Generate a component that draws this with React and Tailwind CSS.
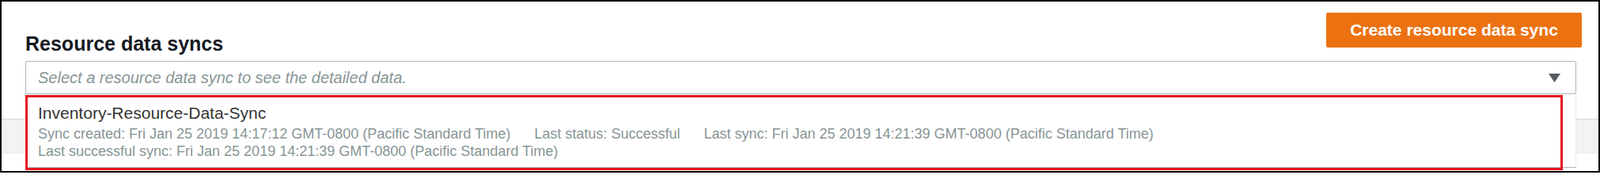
import React from 'react';

const syncItem = {
  name: 'Inventory-Resource-Data-Sync',
  created: 'Fri Jan 25 2019 14:17:12 GMT-0800 (Pacific Standard Time)',
  status: 'Successful',
  lastSync: 'Fri Jan 25 2019 14:21:39 GMT-0800 (Pacific Standard Time)',
  lastSuccess: 'Fri Jan 25 2019 14:21:39 GMT-0800 (Pacific Standard Time)',
};

function Caret() {
  return (
    <svg width="15" height="11" viewBox="0 0 15 11" className="shrink-0">
      <polygon points="0,0 15,0 7.5,11" fill="#545b64" />
    </svg>
  );
}

export default function App() {
  return (
    <div className="relative w-[2022px] h-[218px] overflow-hidden border-2 border-black bg-white font-['Liberation_Sans',Arial,sans-serif]">
      <div className="pl-[30px] pr-[28px] pt-[14px]">
        {/* Header */}
        <div className="flex items-start justify-between">
          <h1 className="pt-[24px] text-[25px] leading-[30px] font-bold text-[#16191f]">
            Resource data syncs
          </h1>
          <button className="-mr-[7px] h-[44px] w-[323px] rounded-[2px] bg-[#ec7211] text-[21px] font-bold text-white">
            Create resource data sync
          </button>
        </div>

        {/* Select */}
        <div className="mt-[7px] flex h-[42px] items-center justify-between rounded-[2px] border border-[#aab7b8] bg-white pl-[15px] pr-[19px]">
          <span className="text-[20px] italic leading-[40px] text-[#879596]">
            Select a resource data sync to see the detailed data.
          </span>
          <Caret />
        </div>
      </div>

      {/* Table header behind the open list */}
      <div className="mt-[31px] h-[44px] border-y border-t-[#d5dbdb] border-b-[#eaeded] bg-[#f2f3f3]" />

      {/* Open dropdown list */}
      <div className="absolute left-[30px] top-[117px] w-[1960px] border-x border-b border-x-[#e5eaea] border-b-[#aab7b8] bg-white pl-[15px] pt-[11px] pb-[9px]">
        <div className="text-[21px] leading-[26px] text-[#333]">{syncItem.name}</div>
        <div className="mt-[2px] text-[18px] leading-[22px] text-[#879596]">
          <div className="flex gap-[30px] whitespace-nowrap">
            <span>Sync created: {syncItem.created}</span>
            <span>Last status: {syncItem.status}</span>
            <span>Last sync: {syncItem.lastSync}</span>
          </div>
          <div className="whitespace-nowrap">Last successful sync: {syncItem.lastSuccess}</div>
        </div>
      </div>

      {/* Highlight */}
      <div className="pointer-events-none absolute left-[30px] top-[118px] h-[95px] w-[1943px] border-[3px] border-[#e5161f]" />
    </div>
  );
}
